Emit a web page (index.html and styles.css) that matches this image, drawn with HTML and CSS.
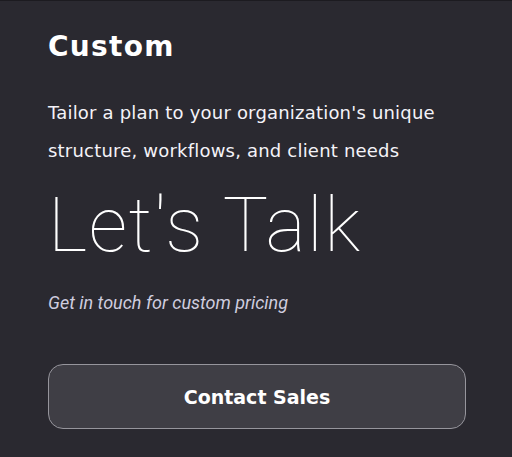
FILE: index.html
```html
<!DOCTYPE html>
<html lang="en">
<head>
    <meta charset="UTF-8">
    <meta name="viewport" content="width=device-width, initial-scale=1.0">
    <title>Custom Plan</title>
    <link rel="stylesheet" href="styles.css">
</head>
<body>
    <div class="plan">
        <h2 class="plan-name">Custom</h2>
        <p class="plan-desc">Tailor a plan to your organization's unique structure, workflows, and client needs</p>
        <div class="price">Let's Talk</div>
        <p class="price-note">Get in touch for custom pricing</p>
        <a href="#" class="button">Contact Sales</a>
    </div>
</body>
</html>
```

FILE: styles.css
```css
html, body {
    margin: 0;
    height: 100%;
}
body {
    background: #2a2930;
    border-top: 1px solid #1c1b20;
    box-sizing: border-box;
    color: #fff;
    font-family: "DejaVu Sans", sans-serif;
}
.plan {
    padding: 30px 46px 0 48px;
    display: flex;
    flex-direction: column;
}
.plan-name {
    margin: 0;
    font-size: 28px;
    line-height: 32px;
    font-weight: bold;
    letter-spacing: 1.3px;
}
.plan-desc {
    margin: 31px 0 0;
    font-size: 18px;
    line-height: 38px;
    letter-spacing: 0.2px;
    color: #f4f3f8;
    max-width: 410px;
}
.price {
    margin-top: 18px;
    font-family: Roboto, sans-serif;
    font-weight: 100;
    font-size: 76px;
    line-height: 74px;
    letter-spacing: 1.5px;
}
.price-note {
    margin: 31px 0 0;
    font-family: Roboto, sans-serif;
    font-style: italic;
    font-size: 18px;
    line-height: 20px;
    color: #cfcddf;
}
.button {
    margin-top: 51px;
    height: 65px;
    box-sizing: border-box;
    display: flex;
    align-items: center;
    justify-content: center;
    background: #3f3e45;
    border: 1px solid #96959c;
    border-radius: 15px;
    color: #fff;
    text-decoration: none;
    font-weight: bold;
    font-size: 19px;
}
```
